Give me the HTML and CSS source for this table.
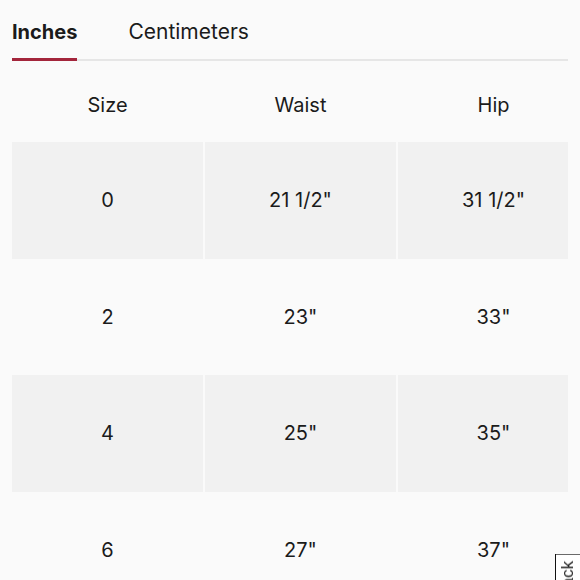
FILE: index.html
```html
<!DOCTYPE html>
<html lang="en">
<head>
<meta charset="utf-8">
<title>Size chart</title>
<link rel="stylesheet" href="styles.css">
</head>
<body>
<div class="page">
  <nav class="tabs">
    <div class="tab tab-active">Inches</div>
    <div class="tab">Centimeters</div>
  </nav>
  <div class="table-wrap">
    <div class="table">
      <div class="cell head">Size</div>
      <div class="cell head">Waist</div>
      <div class="cell head">Hip</div>

      <div class="cell shaded">0</div>
      <div class="cell shaded">21 1/2"</div>
      <div class="cell shaded">31 1/2"</div>

      <div class="cell">2</div>
      <div class="cell">23"</div>
      <div class="cell">33"</div>

      <div class="cell shaded">4</div>
      <div class="cell shaded">25"</div>
      <div class="cell shaded">35"</div>

      <div class="cell">6</div>
      <div class="cell">27"</div>
      <div class="cell">37"</div>
    </div>
  </div>
</div>
<div class="feedback">Feedback</div>
</body>
</html>
```

FILE: styles.css
```css
html, body {
  margin: 0;
  padding: 0;
  overflow: hidden;
  height: 100%;
}
body {
  background: #fafafa;
  color: #1b1b1b;
  font-family: Inter, "Liberation Sans", sans-serif;
}
.page {
  padding: 0 12px;
}
.tabs {
  display: flex;
  gap: 51px;
  border-bottom: 2px solid #e6e6e6;
}
.tab {
  font-size: 21px;
  line-height: 24px;
  padding: 20px 0 14px;
  border-bottom: 3px solid transparent;
  margin-bottom: -2px;
}
.tab-active {
  font-size: 20px;
  font-weight: 700;
  border-bottom-color: #a3253b;
}
.table-wrap {
  width: 556px;
  overflow: hidden;
}
.table {
  display: grid;
  grid-template-columns: 191px 191px 191px;
  grid-template-rows: 75px repeat(4, 116.5px);
  column-gap: 2px;
  padding-top: 6px;
}
.cell {
  display: flex;
  align-items: center;
  justify-content: center;
  font-size: 20px;
}
.shaded {
  background: #f1f1f1;
}
.feedback {
  position: fixed;
  left: 555px;
  top: 554px;
  width: 28px;
  background: #fff;
  border: 1px solid #111;
  writing-mode: vertical-rl;
  transform: rotate(180deg);
  font-family: "Liberation Sans", sans-serif;
  font-size: 17px;
  line-height: 24px;
  padding: 0 0 6px;
  text-align: left;
  color: #222;
}
```
